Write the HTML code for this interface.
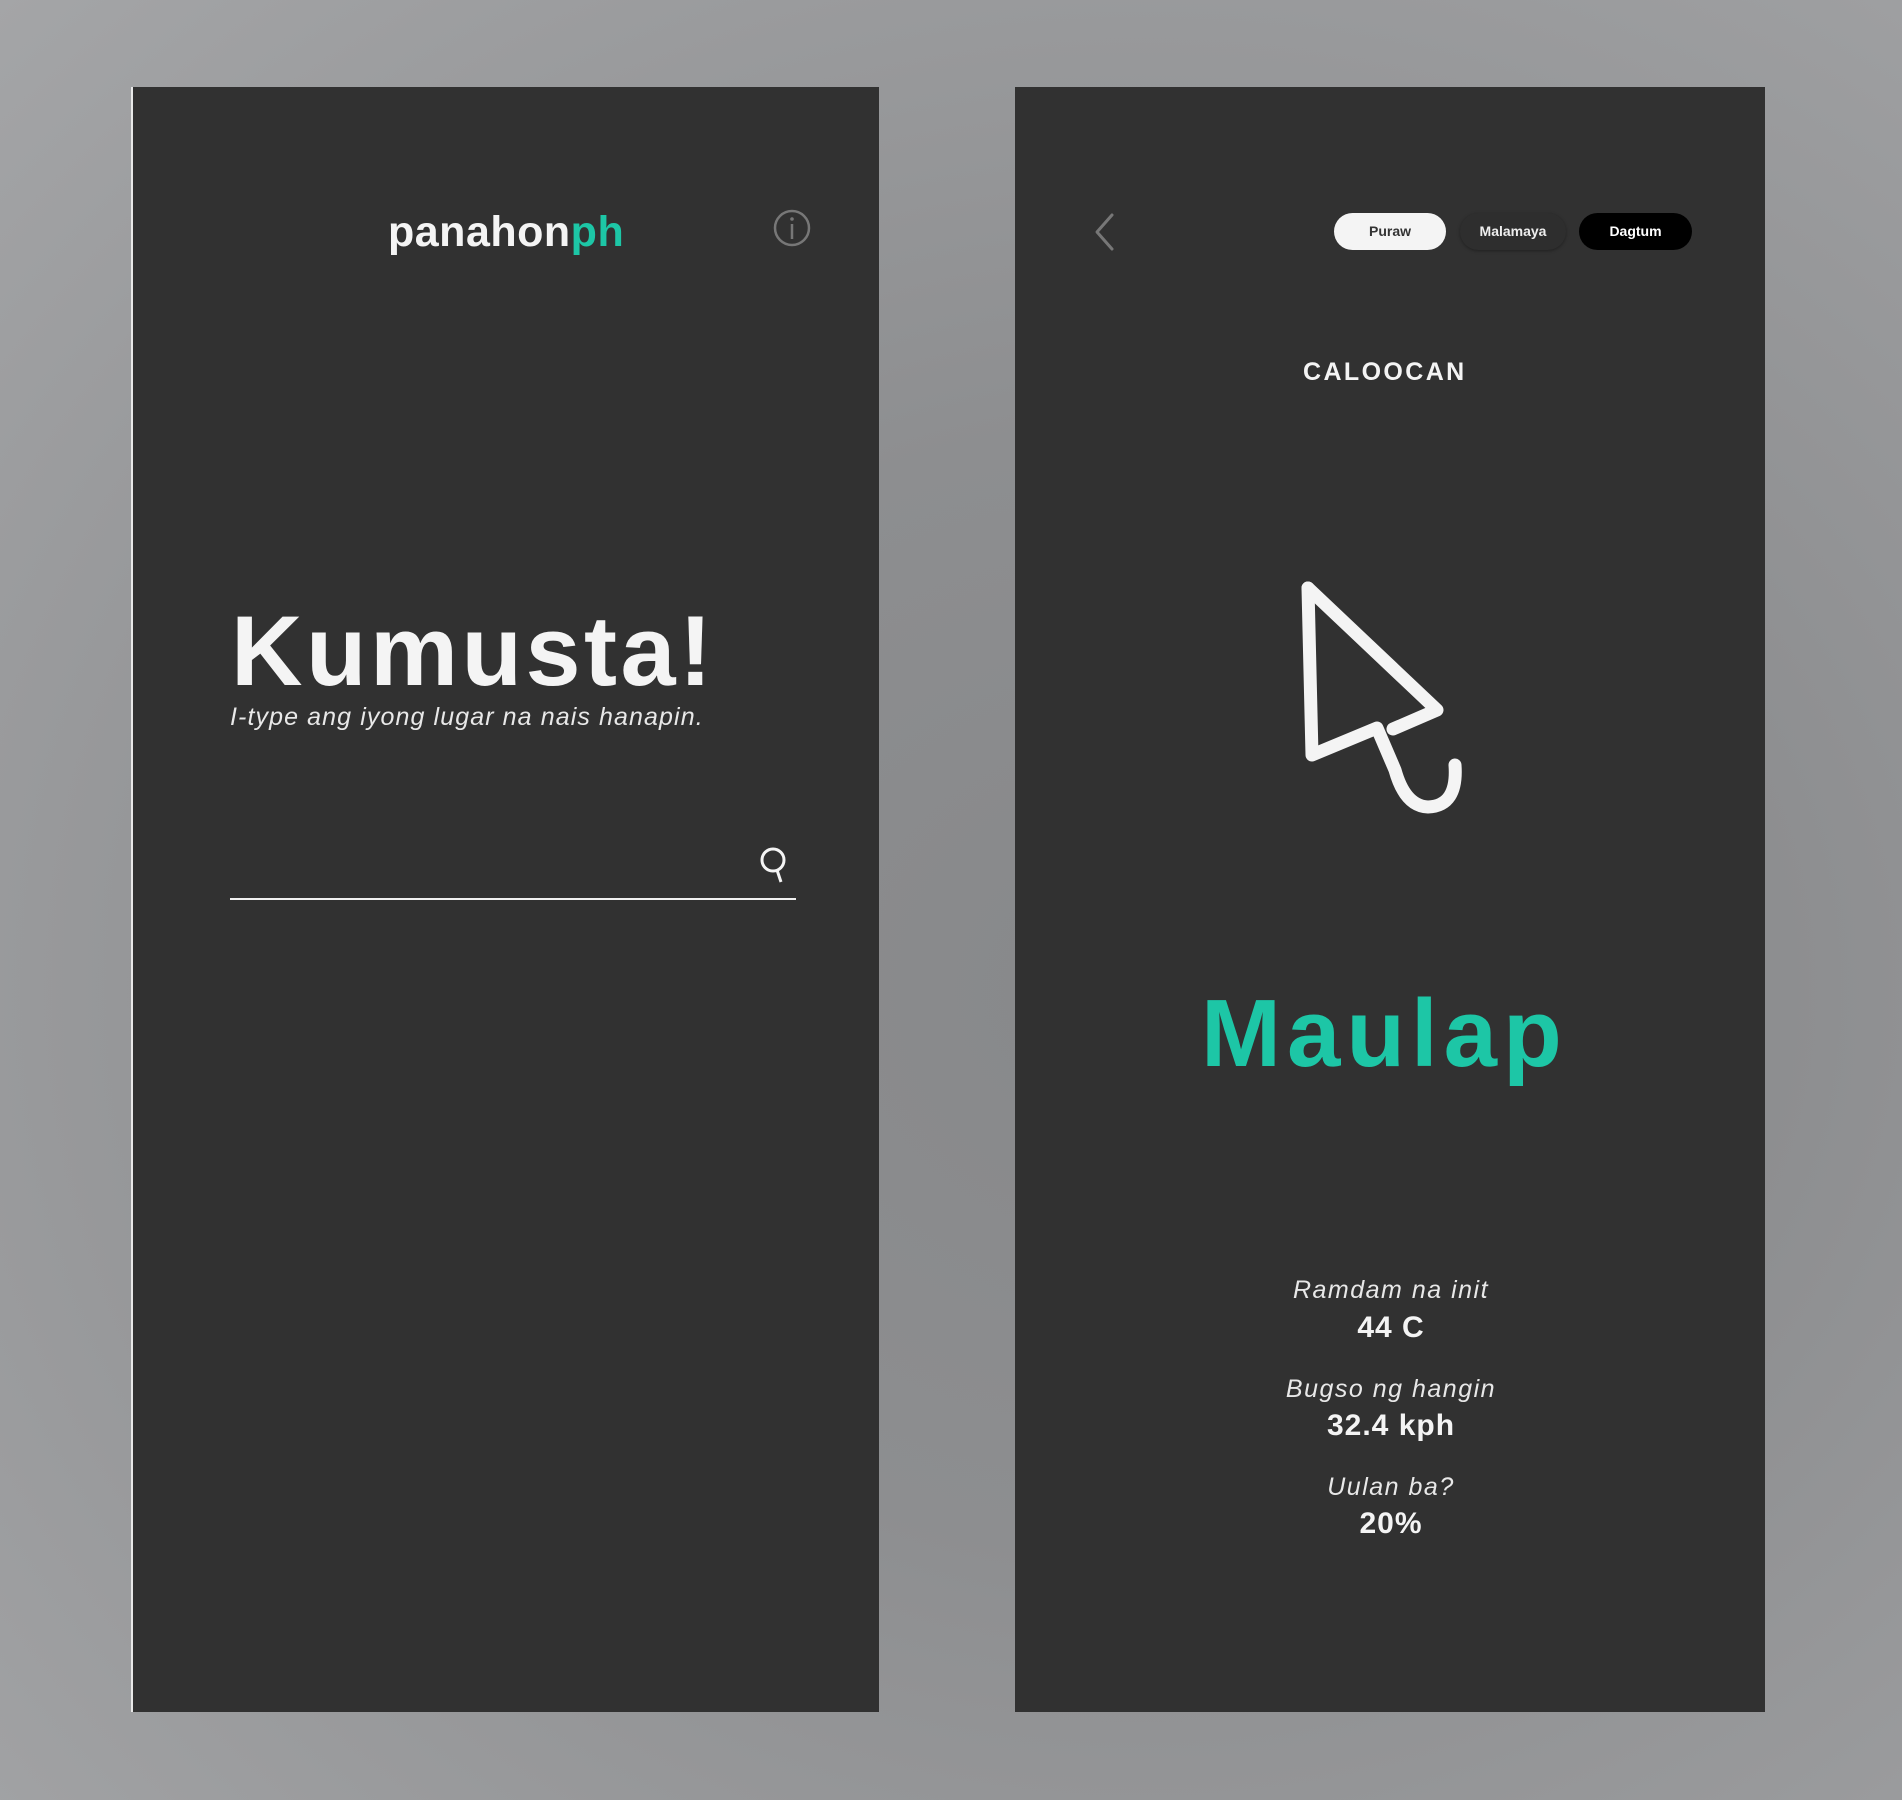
<!DOCTYPE html>
<html><head><meta charset="utf-8"><style>
*{margin:0;padding:0;box-sizing:border-box}
body{width:1902px;height:1800px;overflow:hidden;font-family:"Liberation Sans",sans-serif;background:radial-gradient(ellipse at 60% 55%,#87888a 0%,#8d8e90 40%,#a4a5a7 100%);position:relative}
.panel{position:absolute;background:#313131;top:87px;height:1625px}
.t{position:absolute;line-height:1;white-space:nowrap;color:#f4f4f4}
.c{transform:translateX(-50%)}
.pill{position:absolute;top:213px;height:37px;border-radius:19px;font-size:14px;line-height:37px;text-align:center;font-weight:bold}
.lab{font-size:25px;font-style:italic;color:#e8e8e8;letter-spacing:1.5px}
.val{font-size:30px;font-weight:bold;letter-spacing:1px}
</style></head><body>
<div class="panel" style="left:131px;width:748px;border-left:2px solid #e8e8e8"></div>
<div class="panel" style="left:1015px;width:750px"></div>

<div class="t" style="left:388px;top:211px;font-size:43px;font-weight:bold;letter-spacing:0.5px">panahon<span style="color:#1dc6a6">ph</span></div>
<svg style="position:absolute;left:772px;top:208px" width="40" height="40"><circle cx="20" cy="20" r="17" fill="none" stroke="#777" stroke-width="2.5"/><line x1="20" y1="16" x2="20" y2="31" stroke="#777" stroke-width="2.5"/><circle cx="20" cy="11" r="1.8" fill="#777"/></svg>
<div class="t" style="left:231px;top:601px;font-size:99px;font-weight:bold;letter-spacing:3.5px">Kumusta!</div>
<div class="t" style="left:230px;top:705px;font-size:25px;font-style:italic;color:#e8e8e8;letter-spacing:1.1px">I-type ang iyong lugar na nais hanapin.</div>
<div style="position:absolute;left:230px;top:898px;width:566px;height:2px;background:#f0f0f0"></div>
<svg style="position:absolute;left:755px;top:840px" width="40" height="50"><circle cx="18" cy="20" r="11" fill="none" stroke="#f4f4f4" stroke-width="3"/><line x1="22" y1="30" x2="26" y2="42" stroke="#f4f4f4" stroke-width="3"/></svg>

<svg style="position:absolute;left:1090px;top:210px" width="30" height="45"><polyline points="22,5 7,22 22,39" fill="none" stroke="#777" stroke-width="3" stroke-linecap="round" stroke-linejoin="round"/></svg>
<div class="pill" style="left:1334px;width:112px;background:#f4f4f4;color:#333">Puraw</div>
<div class="pill" style="left:1460px;width:106px;background:#2e2e2e;color:#eee;box-shadow:0 1px 3px rgba(0,0,0,.35)">Malamaya</div>
<div class="pill" style="left:1579px;width:113px;background:#000;color:#fff">Dagtum</div>
<div class="t" style="left:1303px;top:360px;font-size:25px;font-weight:bold;letter-spacing:2.4px">CALOOCAN</div>
<svg style="position:absolute;left:1280px;top:570px" width="200" height="250" viewBox="1280 570 200 250">
<path d="M1308,588 L1312,755 L1377,728 L1395,770 Q1405,806 1428,807 Q1458,806 1455,765" fill="none" stroke="#f4f4f4" stroke-width="13" stroke-linecap="round" stroke-linejoin="round"/>
<path d="M1393,729 L1437,710 L1308,588" fill="none" stroke="#f4f4f4" stroke-width="13" stroke-linecap="round" stroke-linejoin="round"/>
</svg>
<div class="t" style="left:1201px;top:986px;font-size:96px;font-weight:bold;color:#1dc6a6;letter-spacing:6px">Maulap</div>

<div class="t c lab" style="left:1391px;top:1278px">Ramdam na init</div>
<div class="t c val" style="left:1391px;top:1313px">44 C</div>
<div class="t c lab" style="left:1391px;top:1377px">Bugso ng hangin</div>
<div class="t c val" style="left:1391px;top:1411px">32.4 kph</div>
<div class="t c lab" style="left:1391px;top:1475px">Uulan ba?</div>
<div class="t c val" style="left:1391px;top:1509px">20%</div>
</body></html>
